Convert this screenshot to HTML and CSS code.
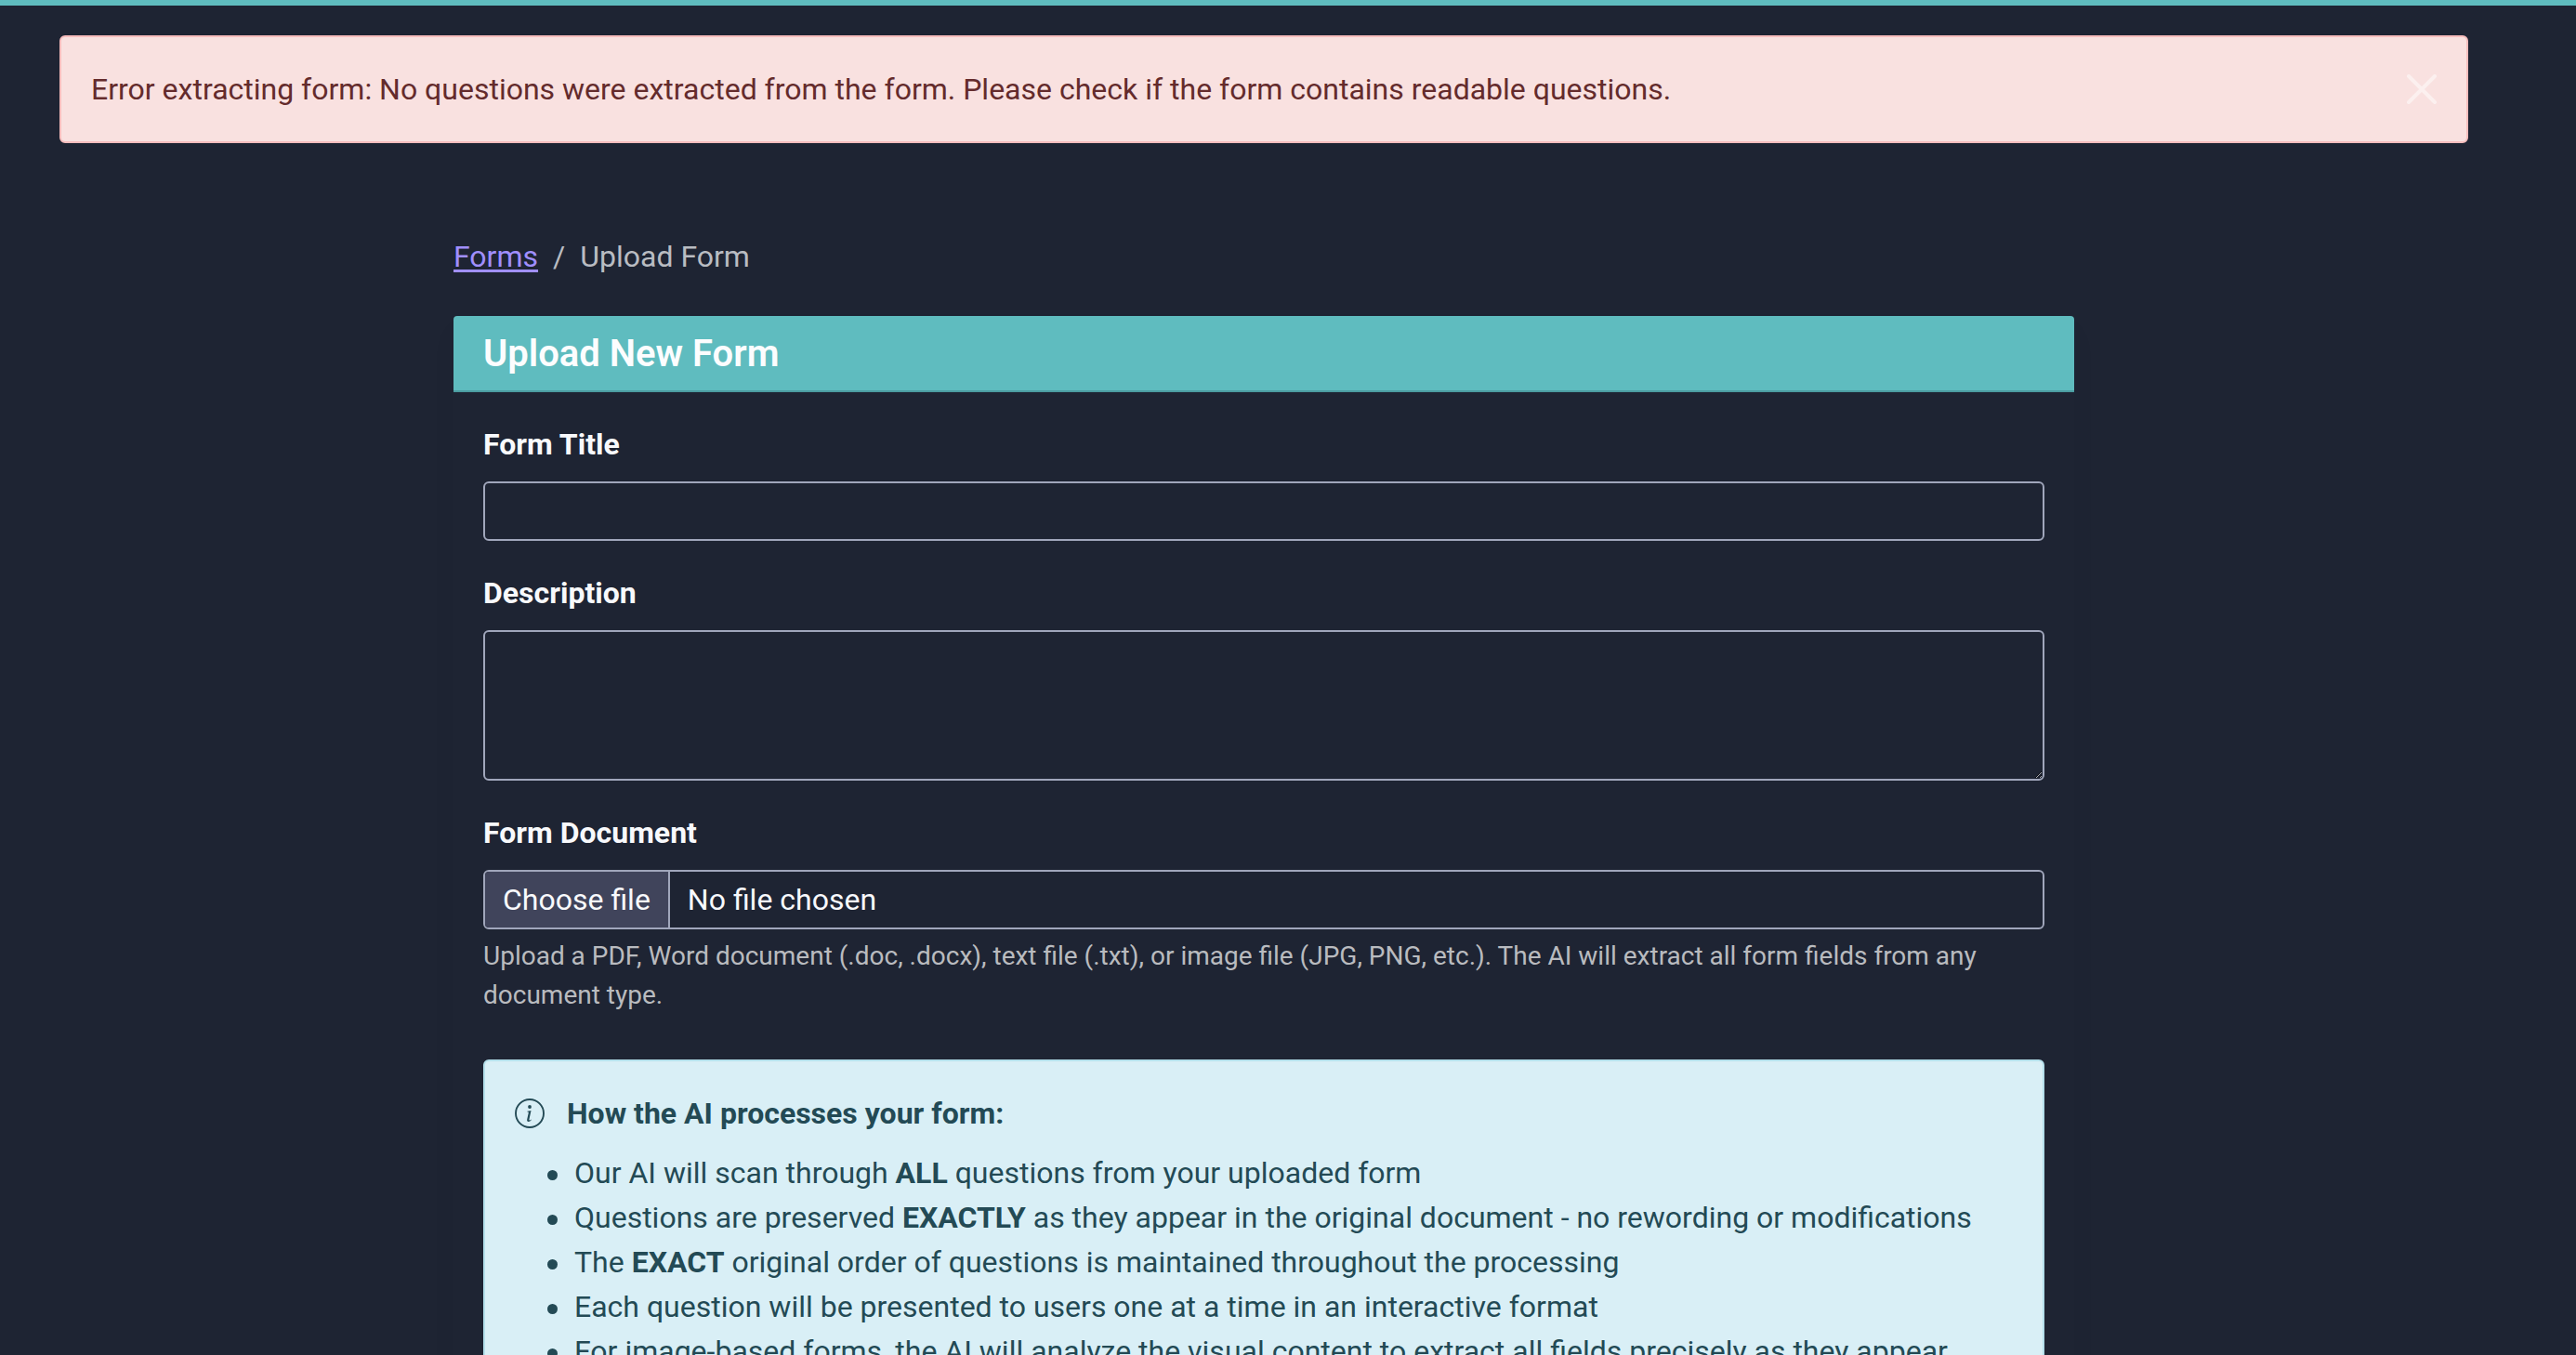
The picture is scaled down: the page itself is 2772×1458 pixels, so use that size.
FILE: index.html
```html
<!DOCTYPE html>
<html lang="en">
<head>
  <meta charset="utf-8">
  <meta name="viewport" content="width=device-width, initial-scale=1">
  <title>Upload Form</title>
  <link rel="stylesheet" href="styles.css">
</head>
<body>
  <main class="page">
    <div class="alert alert-danger" role="alert">
      <span>Error extracting form: No questions were extracted from the form. Please check if the form contains readable questions.</span>
      <button type="button" class="close" aria-label="Close">
        <svg viewBox="0 0 32 32" width="32" height="32" aria-hidden="true"><path d="M2 2 30 30M30 2 2 30" fill="none" stroke="currentColor" stroke-width="4" stroke-linecap="round"/></svg>
      </button>
    </div>

    <div class="content">
      <nav aria-label="breadcrumb">
        <ol class="breadcrumb">
          <li><a href="#forms">Forms</a></li>
          <li aria-current="page">Upload Form</li>
        </ol>
      </nav>

      <section class="card">
        <h1 class="card-header">Upload New Form</h1>
        <form class="card-body">
          <div class="field">
            <label class="label" for="title">Form Title</label>
            <input class="control" type="text" id="title">
          </div>
          <div class="field">
            <label class="label" for="description">Description</label>
            <textarea class="control control-area" id="description"></textarea>
          </div>
          <div class="field">
            <label class="label" for="document">Form Document</label>
            <div class="file">
              <input class="file-input" type="file" id="document" aria-describedby="document-help">
              <label class="control file-control" for="document">
                <span class="file-button">Choose file</span>
                <span class="file-name">No file chosen</span>
              </label>
            </div>
            <p class="help" id="document-help">Upload a PDF, Word document (.doc, .docx), text file (.txt), or image file (JPG, PNG, etc.). The AI will extract all form fields from any document type.</p>
          </div>

          <div class="alert alert-info">
            <div class="info-title">
              <svg viewBox="0 0 16 16" width="32" height="32" fill="currentColor" aria-hidden="true">
                <circle cx="8" cy="8" r="7.5" fill="none" stroke="currentColor" stroke-width=".95"/>
                <circle cx="8" cy="4.5" r=".95"/>
                <path d="M6.7 6.85 8.75 6.5 7.75 11.1c-.08.4 0 .6.25.6.25 0 .5-.15.8-.45l.15.25c-.5.6-1.05.95-1.6.95-.65 0-.9-.45-.75-1.15l.8-3.7c.05-.28 0-.38-.25-.4l-.5-.05z"/>
              </svg>
              <strong>How the AI processes your form:</strong>
            </div>
            <ul class="info-list">
              <li>Our AI will scan through <strong>ALL</strong> questions from your uploaded form</li>
              <li>Questions are preserved <strong>EXACTLY</strong> as they appear in the original document - no rewording or modifications</li>
              <li>The <strong>EXACT</strong> original order of questions is maintained throughout the processing</li>
              <li>Each question will be presented to users one at a time in an interactive format</li>
              <li>For image-based forms, the AI will analyze the visual content to extract all fields precisely as they appear</li>
            </ul>
          </div>
        </form>
      </section>
    </div>
  </main>
</body>
</html>
```
FILE: styles.css
```css
*,
*::before,
*::after {
  box-sizing: border-box;
}

body {
  margin: 0;
  border-top: 6px solid #5fbcbf;
  background: #1e2433;
  color: #f8f9fc;
  font: 32px/48px Roboto, "Liberation Sans", sans-serif;
}

.page {
  padding: 32px 116px 32px 64px;
}

.alert {
  padding: 32px;
  border: 2px solid;
  border-radius: 6px;
}

.alert-danger {
  display: flex;
  align-items: center;
  justify-content: space-between;
  border-color: #f7bdbd;
  background: #f9e1e0;
  color: #642b2c;
}

.close {
  display: flex;
  padding: 0;
  border: 0;
  background: none;
  color: #ffffff;
  opacity: 0.5;
  cursor: pointer;
}

.content {
  max-width: 1744px;
  margin: 0 auto;
  padding-top: 98px;
}

.breadcrumb {
  display: flex;
  margin: 0 0 40px;
  padding: 0;
  list-style: none;
  color: #b9bcc2;
}

.breadcrumb li + li::before {
  content: "/";
  padding: 0 16px;
}

.breadcrumb a {
  color: #a08fff;
  text-decoration-thickness: 3px;
  text-underline-offset: 3px;
}

.card {
  border-radius: 4px;
  box-shadow: 0 16px 32px rgba(0, 0, 0, 0.03);
}

.card-header {
  margin: 0;
  padding: 17px 32px 15px;
  border-bottom: 2px solid #4b9ca1;
  border-radius: 4px 4px 0 0;
  background: #5fbcbf;
  color: #fcfdfe;
  font-size: 40px;
  font-weight: 600;
}

.card-body {
  padding: 32px;
}

.field {
  margin-bottom: 32px;
}

.label {
  display: block;
  margin-bottom: 16px;
  font-weight: 700;
}

.control {
  display: block;
  width: 100%;
  height: 64px;
  padding: 6px 20px;
  border: 2px solid #a0a6bb;
  border-radius: 6px;
  background: #1e2433;
  color: inherit;
  font: inherit;
}

.control-area {
  height: 162px;
  resize: vertical;
}

.file {
  position: relative;
}

/* The native input stays reachable; its label draws the control. */
.file-input {
  position: absolute;
  inset: 0;
  width: 100%;
  opacity: 0;
}

.file-control {
  display: flex;
  align-items: stretch;
  padding: 0;
  overflow: hidden;
}

.file-button,
.file-name {
  display: flex;
  align-items: center;
  padding: 0 19px;
}

.file-button {
  border-right: 2px solid #a0a6bb;
  background: #40445b;
}

.help {
  margin: 8px 0 0;
  color: #b9bbbf;
  font-size: 28px;
  line-height: 42px;
}

.alert-info {
  margin-top: 48px;
  border-color: #b5e0eb;
  background: #d9eff6;
  color: #234a55;
}

.info-title {
  display: flex;
  align-items: center;
  gap: 24px;
}

.info-list {
  margin: 16px 0 0;
  padding-left: 64px;
  list-style: none;
}

.info-list li::before {
  content: "";
  display: inline-block;
  width: 11px;
  height: 11px;
  margin: 0 18px 0 -29px;
  border-radius: 50%;
  background: currentColor;
  vertical-align: middle;
}
```
